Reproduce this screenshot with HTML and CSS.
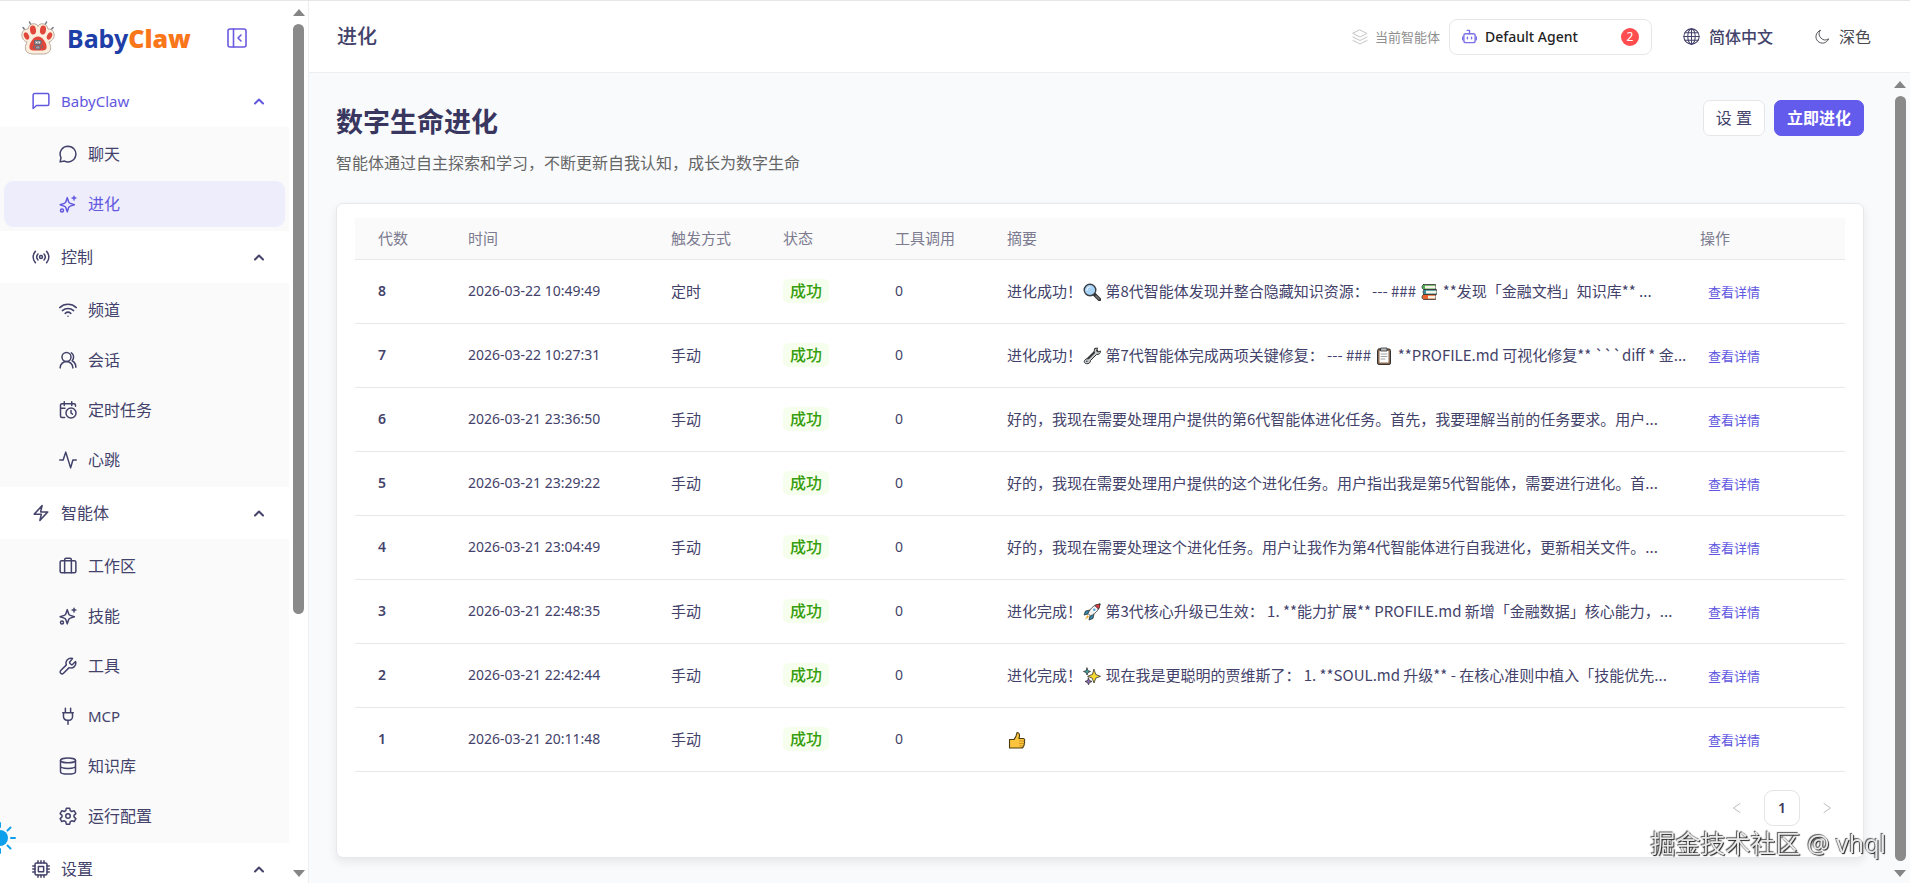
FILE: index.html
```
<!doctype html>
<html lang="zh-CN">
<head>
	<meta charset="UTF-8">
	<meta name="viewport" content="width=device-width, initial-scale=1">
	<title>BabyClaw</title>
	<link rel="stylesheet" href="styles.css">
</head>
<body>
	<!-- 图标 -->
	<svg class="sprite" aria-hidden="true">
		<symbol id="i-sparkle" viewBox="0 0 24 24"><path d="M11 3.500 12.800 9a3.500 3.500 0 0 0 2.200 2.200l5.500 1.800-5.500 1.800a3.500 3.500 0 0 0-2.200 2.200L11 22.500l-1.800-5.500a3.500 3.500 0 0 0-2.200-2.200L1.500 13 7 11.200A3.500 3.500 0 0 0 9.200 9z"/><path d="M20 1.500v5M17.500 4h5"/><circle cx="4" cy="20.500" r="2"/></symbol>
		<symbol id="i-up" viewBox="0 0 12 12"><path d="M2 8.500l4-4 4 4"/></symbol>
	</svg>

	<div class="app">
		<aside class="sidebar">
			<div class="side_main">
				<div class="brand">
					<svg class="paw" viewBox="0 0 34 34">
						<path d="M4 9 2 6.500M10 4 8.500 1M24 4l1.500-3M30 9l2-2.500" stroke="#7d7f88" stroke-width="1.600"/>
						<path d="M17 5C15.500 1.500 8 1.500 7 8 2 7.500-.5 13 1.500 17c1 2.500 3 3.500 4.500 4-2 4-2.500 8 .5 10.500 3 2 6.500 1.500 10.500 1.500s7.500.5 10.500-1.500c3-2.500 2.500-6.500.5-10.500 1.500-.5 3.500-1.500 4.500-4C34.500 13 32 7.500 27 8 26 1.500 18.500 1.500 17 5z" fill="#fbeedd" stroke="#a8988c" stroke-width=".8"/>
						<g fill="#e2473c">
							<ellipse cx="12" cy="9" rx="3" ry="4.500" transform="rotate(-8 12 9)"/>
							<ellipse cx="22" cy="9" rx="3" ry="4.500" transform="rotate(8 22 9)"/>
							<ellipse cx="5.500" cy="15" rx="2.400" ry="3.800" transform="rotate(-25 5.500 15)"/>
							<ellipse cx="28.500" cy="15" rx="2.400" ry="3.800" transform="rotate(25 28.500 15)"/>
							<path d="M17 15.500c4.500 0 8 6 8.500 9.500s-1.500 4.500-4.500 4.500h-8c-3 0-5-1-4.500-4.500s4-9.500 8.500-9.500z"/>
						</g>
						<path d="M14 19.500h6v4h-6zM15 25h4v3h-4zM12.500 25v2M21.500 25v2" fill="#a5a2a6" stroke="#626a76"/>
						<path d="M15.500 21.500h.1M18.500 21.500h.1" stroke="#fff"/>
					</svg>
					<span class="brand_name">Baby<b>Claw</b></span>
					<button class="fold" type="button" aria-label="收起菜单">
						<svg class="line" viewBox="0 0 20 20"><rect x="1" y="1" width="18" height="18" rx="2"/><path d="M6.500 1v18M14 7l-3 3 3 3"/></svg>
					</button>
				</div>
				<nav class="menu">
					<button class="group on" type="button"><svg class="line" viewBox="0 0 24 24"><path d="M22.500 16a2 2 0 0 1-2 2H6l-4.500 4V4a2 2 0 0 1 2-2h17a2 2 0 0 1 2 2z"/></svg><span class="en">BabyClaw</span><svg class="arrow"><use href="#i-up"/></svg></button>
					<ul class="sub">
						<li><a href="#"><svg class="line" viewBox="0 0 24 24"><path d="M12 1.500a10.500 10.500 0 1 1-4.700 19.900L1.500 22.500l1.200-5.700A10.500 10.500 0 0 1 12 1.500z"/></svg>聊天</a></li>
						<li><a class="active" href="#"><svg class="line" viewBox="0 0 24 24"><use href="#i-sparkle"/></svg>进化</a></li>
					</ul>
					<button class="group" type="button"><svg class="line" viewBox="0 0 24 24"><path d="M4.500 19.500a11 11 0 0 1 0-15M8 16a6 6 0 0 1 0-8M16 8a6 6 0 0 1 0 8M19.500 4.500a11 11 0 0 1 0 15"/><circle cx="12" cy="12" r="2"/></svg>控制<svg class="arrow"><use href="#i-up"/></svg></button>
					<ul class="sub">
						<li><a href="#"><svg class="line" viewBox="0 0 24 24"><path d="M1 8.800a16 16 0 0 1 22 0M4.500 12.800a11 11 0 0 1 15 0M8.300 16.500a5.500 5.500 0 0 1 7.400 0M12 20.200v.1"/></svg>频道</a></li>
						<li><a href="#"><svg class="line" viewBox="0 0 24 24"><circle cx="10" cy="8" r="6"/><path d="M1.500 22.500a8.500 8.500 0 0 1 17 0M16.500 2.500c3.500 2 4 7.500 1 10.500 3.500 2 5 5 5 8.500"/></svg>会话</a></li>
						<li><a href="#"><svg class="line" viewBox="0 0 24 24"><path d="M22 7V5.500a2 2 0 0 0-2-2H4a2 2 0 0 0-2 2V20a2 2 0 0 0 2 2h3.500M7 1v5M17 1v5M2 9.500h6"/><circle cx="16" cy="16" r="6.700"/><path d="M16 12.500V16l2 1.500"/></svg>定时任务</a></li>
						<li><a href="#"><svg class="line" viewBox="0 0 24 24"><path d="M1 12h4.500L9 1.500l6.500 21L18.500 12H23"/></svg>心跳</a></li>
					</ul>
					<button class="group" type="button"><svg class="line" viewBox="0 0 24 24"><path d="M3 13.500 13.500 2l-2 8.500H21L10.500 22l2-8.500z"/></svg>智能体<svg class="arrow"><use href="#i-up"/></svg></button>
					<ul class="sub">
						<li><a href="#"><svg class="line" viewBox="0 0 24 24"><rect x="1.500" y="5" width="21" height="16" rx="2"/><path d="M7.500 21V3.500a2 2 0 0 1 2-2h5a2 2 0 0 1 2 2V21"/></svg>工作区</a></li>
						<li><a href="#"><svg class="line" viewBox="0 0 24 24"><use href="#i-sparkle"/></svg>技能</a></li>
						<li><a href="#"><svg class="line" viewBox="0 0 24 24"><path d="M14.500 6.500a1.300 1.300 0 0 0 0 1.800l1.700 1.700a1.300 1.300 0 0 0 1.800 0l4-4a6.500 6.500 0 0 1-8.500 8.200L6 21.700a2.600 2.600 0 0 1-3.700-3.700L9.800 10.500A6.500 6.500 0 0 1 18 2z"/></svg>工具</a></li>
						<li><a href="#"><svg class="line" viewBox="0 0 24 24"><path d="M12 17.500V23M8.500 7.500V1.500M15.500 7.500V1.500M5 7.500h14M6 7.500V13a4.500 4.500 0 0 0 4.500 4.500h3A4.500 4.500 0 0 0 18 13V7.500"/></svg><span class="en">MCP</span></a></li>
						<li><a href="#"><svg class="line" viewBox="0 0 24 24"><ellipse cx="12" cy="4.500" rx="10" ry="3.200"/><path d="M2 4.500v15c0 1.800 4.500 3.200 10 3.200s10-1.400 10-3.200v-15M2 12c0 1.800 4.500 3.200 10 3.200S22 13.800 22 12"/></svg>知识库</a></li>
						<li><a href="#"><svg class="line" viewBox="0 0 24 24"><path d="M9.800 1.500h4.400l.8 3.300 2 1.200 3.300-1 2.200 3.900-2.500 2.300v2l2.500 2.300-2.200 3.900-3.300-1-2 1.200-.8 3.300H9.800L9 19.600l-2-1.200-3.300 1-2.200-3.900L4 13.200v-2L1.500 8.900 3.700 5 7 6l2-1.200z"/><circle cx="12" cy="12" r="3"/></svg>运行配置</a></li>
					</ul>
					<button class="group" type="button"><svg class="line" viewBox="0 0 24 24"><rect x="4" y="4" width="16" height="16" rx="2"/><rect x="8.500" y="8.500" width="7" height="7"/><path d="M8 1v3M12 1v3M16 1v3M8 20v3M12 20v3M16 20v3M1 8h3M1 12h3M1 16h3M20 8h3M20 12h3M20 16h3"/></svg>设置<svg class="arrow"><use href="#i-up"/></svg></button>
				</nav>
			</div>
			<div class="scroll"><i class="tri_up"></i><div class="thumb thumb_side"></div><i class="tri_down"></i></div>
		</aside>

		<div class="page">
			<header class="topbar">
				<h1>进化</h1>
				<label class="agent_label" for="agent">
					<svg viewBox="0 0 16 16"><path d="M8 1 15 4.500 8 8 1 4.500zM1 8l7 3.500L15 8M1 11.500 8 15l7-3.500"/></svg>当前智能体
				</label>
				<div class="agent">
					<svg viewBox="0 0 16 16"><rect x="2" y="5" width="12" height="9.500" rx="2"/><path d="M8 5V1.500H5.500M.5 8.500v3M15.500 8.500v3M5.800 8.800v1.700M10.200 8.800v1.700"/></svg>
					<select id="agent"><option>Default Agent</option></select>
					<span class="badge">2</span>
				</div>
				<button class="tool" type="button">
					<svg viewBox="0 0 16 16"><circle cx="8" cy="8" r="7.200"/><ellipse cx="8" cy="8" rx="3.500" ry="7.200"/><path d="M8 .8v14.400M.8 8h14.400M2 4.500h12M2 11.500h12"/></svg>简体中文
				</button>
				<button class="tool dark" type="button">
					<svg viewBox="0 0 16 16"><path d="M5.500 1.500a7 7 0 1 0 9 9A6.500 6.500 0 0 1 5.500 1.500z"/></svg>深色
				</button>
			</header>

			<div class="body">
				<main class="content">
					<div class="head">
						<div>
							<h2>数字生命进化</h2>
							<p>智能体通过自主探索和学习，不断更新自我认知，成长为数字生命</p>
						</div>
						<div class="btns">
							<button class="btn" type="button">设 置</button>
							<button class="btn primary" type="button">立即进化</button>
						</div>
					</div>

					<section class="card">
						<table class="list">
							<thead>
								<tr>
									<th class="w_no">代数</th>
									<th class="w_time">时间</th>
									<th class="w_mid">触发方式</th>
									<th class="w_mid">状态</th>
									<th class="w_mid">工具调用</th>
									<th>摘要</th>
									<th class="w_op">操作</th>
								</tr>
							</thead>
							<tbody>
								<tr>
									<td class="no">8</td><td class="num">2026-03-22 10:49:49</td><td>定时</td><td><span class="tag">成功</span></td><td class="num">0</td>
									<td class="sum">进化成功！<svg class="emoji" viewBox="0 0 18 18"><path d="M11 11l5.500 5.500" stroke="#333" stroke-width="3.600" stroke-linecap="round"/><path d="M13 13l3 3" stroke="#777" stroke-width="1.500"/><circle cx="7" cy="7" r="5.800" fill="#a9d4f5" stroke="#3a3f46" stroke-width="1.400"/><path d="M4 7a3 3 0 0 1 3-3" fill="none" stroke="#e4f3ff" stroke-width="1.200"/></svg> 第8代智能体发现并整合隐藏知识资源： --- ### <svg class="emoji" viewBox="0 0 18 18"><g stroke="#333" stroke-width=".8"><path d="M3.500 1.500h12v5h-12c-2-1-2-4 0-5z" fill="#4fae54"/><path d="M4.500 6.500h12v5h-12c-2-1-2-4 0-5z" fill="#398c9b"/><path d="M3.500 11.500h12v5h-12c-2-1-2-4 0-5z" fill="#e8642c"/></g><path d="M5 2.800h10.500v2.700H5zM6 7.800h10.500v2.700H6zM8 12.800h7.500v2.700H8z" fill="#f6f3e6" stroke="none"/></svg> **发现「金融文档」知识库** ...</td>
									<td><a class="more" href="#">查看详情</a></td>
								</tr>
								<tr>
									<td class="no">7</td><td class="num">2026-03-22 10:27:31</td><td>手动</td><td><span class="tag">成功</span></td><td class="num">0</td>
									<td class="sum">进化成功！<svg class="emoji" viewBox="0 0 18 18"><path d="M4.500 13.500l9-9" stroke="#333" stroke-width="4"/><path d="M12 1.500 14.500 1l-1 3 1.500 1 2.500-1c.3 2.500-2 3.800-4 3.500l-6 6c.3 2-2 3.500-4 3.200S.8 15 1.500 13.500s2.500-2 4-1.500l6-6c-.6-2-.2-3.800.5-4.500z" fill="#c3c8cc" stroke="#333"/><circle cx="3.800" cy="14.200" r=".8" fill="#333" stroke="none"/></svg> 第7代智能体完成两项关键修复： --- ### <svg class="emoji" viewBox="0 0 18 18"><rect x="2.500" y="2" width="13" height="15.500" rx="1.500" fill="#8a6a50" stroke="#333"/><path d="M4.500 4h9v11.500h-9z" fill="#fff" stroke="none"/><path d="M6 1h6v3H6z" fill="#bbb" stroke="#333" stroke-width=".8"/><path d="M6 7h6M6 9.500h6M6 12h4" stroke="#888" stroke-width=".8"/></svg> **PROFILE.md 可视化修复** ```diff * 金...</td>
									<td><a class="more" href="#">查看详情</a></td>
								</tr>
								<tr>
									<td class="no">6</td><td class="num">2026-03-21 23:36:50</td><td>手动</td><td><span class="tag">成功</span></td><td class="num">0</td>
									<td class="sum">好的，我现在需要处理用户提供的第6代智能体进化任务。首先，我要理解当前的任务要求。用户...</td>
									<td><a class="more" href="#">查看详情</a></td>
								</tr>
								<tr>
									<td class="no">5</td><td class="num">2026-03-21 23:29:22</td><td>手动</td><td><span class="tag">成功</span></td><td class="num">0</td>
									<td class="sum">好的，我现在需要处理用户提供的这个进化任务。用户指出我是第5代智能体，需要进行进化。首...</td>
									<td><a class="more" href="#">查看详情</a></td>
								</tr>
								<tr>
									<td class="no">4</td><td class="num">2026-03-21 23:04:49</td><td>手动</td><td><span class="tag">成功</span></td><td class="num">0</td>
									<td class="sum">好的，我现在需要处理这个进化任务。用户让我作为第4代智能体进行自我进化，更新相关文件。...</td>
									<td><a class="more" href="#">查看详情</a></td>
								</tr>
								<tr>
									<td class="no">3</td><td class="num">2026-03-21 22:48:35</td><td>手动</td><td><span class="tag">成功</span></td><td class="num">0</td>
									<td class="sum">进化完成！<svg class="emoji" viewBox="0 0 18 18"><g stroke="#333" stroke-width=".8"><path d="M7 7 2.500 8 1 12l4-1zM11 11l-1 4.500L6 17l1-4z" fill="#2f86a8"/><path d="M16.800 1.200C12 1.500 8 4 5 10.500L7.500 13C13.500 10 16.500 6 16.800 1.200z" fill="#f1f3f5"/><path d="M16.800 1.200c-2 0-3.500.5-5 1.300l3.700 3.700c.8-1.500 1.300-3 1.300-5z" fill="#e0383e"/></g><circle cx="11.300" cy="6.700" r="1.200" fill="#4aa3d8" stroke="none"/><path d="M4.500 12 2 16.500 6 14z" fill="#f7a928" stroke="none"/></svg> 第3代核心升级已生效： 1. **能力扩展** PROFILE.md 新增「金融数据」核心能力，...</td>
									<td><a class="more" href="#">查看详情</a></td>
								</tr>
								<tr>
									<td class="no">2</td><td class="num">2026-03-21 22:42:44</td><td>手动</td><td><span class="tag">成功</span></td><td class="num">0</td>
									<td class="sum">进化完成！<svg class="emoji" viewBox="0 0 18 18"><g stroke="#333" stroke-width=".8"><path d="M11 2.500l1.800 5 4.700 1.800-4.700 1.800L11 16l-1.800-4.900-4.700-1.800 4.700-1.800z" fill="#fbdc2e"/><path d="M4 1l1 2.700L7.500 4.500 5 5.500 4 8 3 5.500.5 4.500 3 3.700z" fill="#3fa7a0"/><path d="M5.500 11l1 2.500 2.500 1-2.500 1-1 2.300-1-2.300-2.500-1 2.500-1z" fill="#8c6bb8"/></g></svg> 现在我是更聪明的贾维斯了： 1. **SOUL.md 升级** - 在核心准则中植入「技能优先...</td>
									<td><a class="more" href="#">查看详情</a></td>
								</tr>
								<tr>
									<td class="no">1</td><td class="num">2026-03-21 20:11:48</td><td>手动</td><td><span class="tag">成功</span></td><td class="num">0</td>
									<td class="sum"><svg class="emoji" viewBox="0 0 18 18"><path d="M1.500 8.500H6c2-2 2.500-4 3-7 2.500 0 3 2.500 2 6h4.500c1.500.5 1.500 2 .7 2.700.7.800.5 2-.2 2.500.5.800.2 1.900-.6 2.300 0 1.200-.9 2-2 2H1.500z" fill="#fcc43c" stroke="#4a3a10" stroke-width="1.100"/><path d="M11.500 10h4M11.500 12.500h4M11.500 15h3.500" stroke="#c48a1c" stroke-width=".8"/></svg></td>
									<td><a class="more" href="#">查看详情</a></td>
								</tr>
							</tbody>
						</table>
						<div class="pager">
							<button type="button" aria-label="上一页" disabled><svg viewBox="0 0 12 12"><path d="M9 1.500 2.500 6 9 10.500"/></svg></button>
							<button class="cur" type="button">1</button>
							<button type="button" aria-label="下一页" disabled><svg viewBox="0 0 12 12"><path d="M3 1.500 9.500 6 3 10.500"/></svg></button>
						</div>
					</section>
				</main>
				<div class="scroll scroll_main"><i class="tri_up"></i><div class="thumb"></div><i class="tri_down"></i></div>
			</div>
		</div>
	</div>

	<!-- 悬浮层 -->
	<svg class="sun" viewBox="0 0 32 32"><circle cx="16" cy="16" r="8"/><path d="M27 16h4M23.500 23.500l3 3M23.500 8.500l3-3M16 27v4M16 5V1"/></svg>
	<div class="mark">掘金技术社区 @ vhql</div>
</body>
</html>
```
FILE: styles.css
```
*{box-sizing: border-box;}
body,h1,h2,p,ul{margin: 0;padding: 0;}
li{list-style-type: none;}
a{text-decoration: none;}
body{
	background-color: #fff;
	color: #43426a;
	font: 16px/24px "Noto Sans", "Noto Sans CJK SC", sans-serif;
	overflow: hidden;
}
button,select{
	font: inherit;
	color: inherit;
	border: 0;
	background: none;
	padding: 0;
	margin: 0;
	cursor: pointer;
}
svg{
	flex: none;
	fill: none;
	stroke: currentColor;
	stroke-linecap: round;
	stroke-linejoin: round;
}
.paw g{stroke: none;}
.sprite{
	position: absolute;
	width: 0;
	height: 0;
}
.app{
	display: flex;
	height: 100vh;
	border-top: 1px solid #e6e6e8;
}

/* 左侧菜单 */
.sidebar{
	display: flex;
	flex: none;
	width: 309px;
	border-right: 1px solid #eeeef1;
	overflow: hidden;
}
.side_main{
	flex: 1;
	min-width: 0;
}
.brand{
	display: flex;
	align-items: center;
	height: 74px;
	padding: 0 46px 0 20px;
}
.paw{
	width: 36px;
	height: 34px;
}
.brand_name{
	margin-left: 11px;
	font-size: 25px;
	font-weight: 700;
	color: #1f3fa8;
}
.brand_name b{color: #f9761a;}
.fold{
	display: flex;
	margin-left: auto;
	color: #6a5ae0;
}
.line{
	width: 18px;
	height: 18px;
	stroke-width: 2;
}
.fold .line{
	width: 20px;
	height: 20px;
	stroke-width: 1.6;
}
.group{
	display: flex;
	align-items: center;
	width: 100%;
	height: 52px;
	padding: 0 28px 0 32px;
	text-align: left;
}
.group .line{margin-right: 11px;}
.group.on{color: #6258e0;}
.arrow{
	width: 12px;
	height: 12px;
	margin-left: auto;
	stroke-width: 2;
}
.en{font-size: 15px;}
.sub{
	display: grid;
	gap: 4px;
	padding: 4px;
	margin-right: 4px;
	background-color: #fafafb;
}
.sub a{
	display: flex;
	align-items: center;
	gap: 11px;
	height: 46px;
	padding-left: 55px;
	border-radius: 9px;
	color: inherit;
}
.sub .active{
	background-color: #eeedfc;
	color: #6258e0;
}

/* 滚动条 */
.scroll{
	display: flex;
	flex-direction: column;
	align-items: center;
	flex: none;
	width: 15px;
	padding: 8px 4px 6px 0;
}
.scroll_main{width: 16px;}
.scroll i{
	border: 6px solid transparent;
}
.scroll .tri_up{
	border-top: 0;
	border-bottom: 7px solid #858585;
}
.scroll .tri_down{
	border-bottom: 0;
	border-top: 7px solid #858585;
	margin-top: auto;
}
.thumb{
	flex: 1;
	width: 11px;
	margin: 8px 0 9px;
	border-radius: 6px;
	background-color: #8a8a8a;
}
.thumb_side{flex: 0 0 68%;}

/* 顶栏 */
.page{
	display: flex;
	flex-direction: column;
	flex: 1;
	min-width: 0;
}
.topbar{
	display: flex;
	align-items: center;
	flex: none;
	height: 72px;
	padding: 0 39px 0 28px;
	border-bottom: 1px solid #eceef0;
}
.topbar h1{
	margin-right: auto;
	font-size: 20px;
	font-weight: 500;
}
.agent_label{
	display: flex;
	align-items: center;
	gap: 7px;
	margin-right: 9px;
	font-size: 13px;
	color: #8f8f8f;
}
.agent_label svg{
	width: 16px;
	height: 16px;
	color: #c4c4c4;
}
.agent{
	display: flex;
	align-items: center;
	width: 203px;
	height: 36px;
	padding: 0 12px;
	border: 1px solid #e6e6ea;
	border-radius: 8px;
}
.agent svg{
	width: 15px;
	height: 15px;
	color: #7a70e8;
	stroke-width: 1.5;
}
.agent select{
	flex: 1;
	height: 24px;
	margin-left: 8px;
	appearance: none;
	font-size: 14px;
	font-weight: 500;
	color: #1f1f1f;
}
.badge{
	width: 18px;
	height: 18px;
	border-radius: 9px;
	background-color: #ff4d4f;
	color: #fff;
	font-size: 12px;
	line-height: 18px;
	text-align: center;
}
.tool{
	display: flex;
	align-items: center;
	gap: 9px;
	margin-left: 31px;
	font-weight: 500;
}
.tool svg{
	width: 17px;
	height: 17px;
}
.tool.dark{
	margin-left: 42px;
	font-weight: 400;
	color: #4a4a52;
}
.tool.dark svg{
	width: 15px;
	height: 15px;
}

/* 内容 */
.body{
	display: flex;
	flex: 1;
	min-height: 0;
	background-color: #f9fafc;
}
.content{
	display: flex;
	flex-direction: column;
	flex: 1;
	min-width: 0;
	padding: 27px 30px 25px 27px;
}
.head{
	display: flex;
	justify-content: space-between;
	margin-bottom: 28px;
}
.head h2{
	font-size: 27px;
	line-height: 44px;
	font-weight: 700;
	color: #39375f;
}
.head p{
	margin-top: 7px;
	color: #666;
}
.btns{
	display: flex;
	gap: 9px;
}
.btn{
	height: 36px;
	padding: 0 12px;
	border: 1px solid #e6e6ea;
	border-radius: 7px;
	background-color: #fff;
}
.btn.primary{
	border-color: #635bec;
	background-color: #635bec;
	color: #fff;
	font-weight: 700;
}
.card{
	flex: 1;
	padding: 14px 18px;
	border: 1px solid #e6e8ec;
	border-radius: 7px;
	background-color: #fff;
	box-shadow: 0 4px 10px rgba(0,0,0,.08);
}
.list{
	width: 100%;
	border-collapse: collapse;
	table-layout: fixed;
	font-size: 15px;
}
.list th,.list td{
	padding: 0 0 0 23px;
	border-bottom: 1px solid #e8e8ea;
	text-align: left;
	white-space: nowrap;
}
.list th{
	height: 41px;
	background-color: #fafafa;
	color: #7c7b90;
	font-weight: 400;
}
.list td{height: 64px;}
.list .w_no{width: 90px;}
.list .w_time{width: 203px;}
.list .w_mid{width: 112px;}
.list .w_op{width: 168px;}
.list .no{
	font-size: 14px;
	font-weight: 600;
}
.list .num{font-size: 14px;}
.list .sum{font-family: "Noto Sans CJK SC", "Noto Sans", sans-serif;}
.tag{
	display: inline-block;
	padding: 0 7px;
	border-radius: 5px;
	background-color: #f6ffed;
	color: #389e0d;
	font-size: 16px;
	font-weight: 500;
}
.emoji{
	width: 18px;
	height: 18px;
	margin: 0 1px;
	vertical-align: -4px;
}
.more{
	padding: 0 8px;
	color: #5f57e0;
	font-size: 13px;
}
.pager{
	display: flex;
	justify-content: flex-end;
	gap: 9px;
	margin-top: 18px;
}
.pager button{
	width: 36px;
	height: 36px;
	color: #bdbdc2;
}
.pager svg{
	width: 12px;
	height: 12px;
}
.pager .cur{
	border: 1px solid #e4e4e8;
	border-radius: 9px;
	color: #3b3a5a;
	font-size: 14px;
	font-weight: 600;
}

.sun{
	position: fixed;
	left: -16px;
	bottom: 29px;
	width: 32px;
	height: 32px;
	color: #0d9fec;
	stroke-width: 2;
}
.sun circle{
	fill: #0d9fec;
	stroke: none;
}
.mark{
	position: fixed;
	right: 24px;
	bottom: 22px;
	color: #e9e9e9;
	font-size: 25px;
	line-height: 36px;
	text-shadow: 1px 1px 1px #222, -1px -1px 1px #555;
}
```
